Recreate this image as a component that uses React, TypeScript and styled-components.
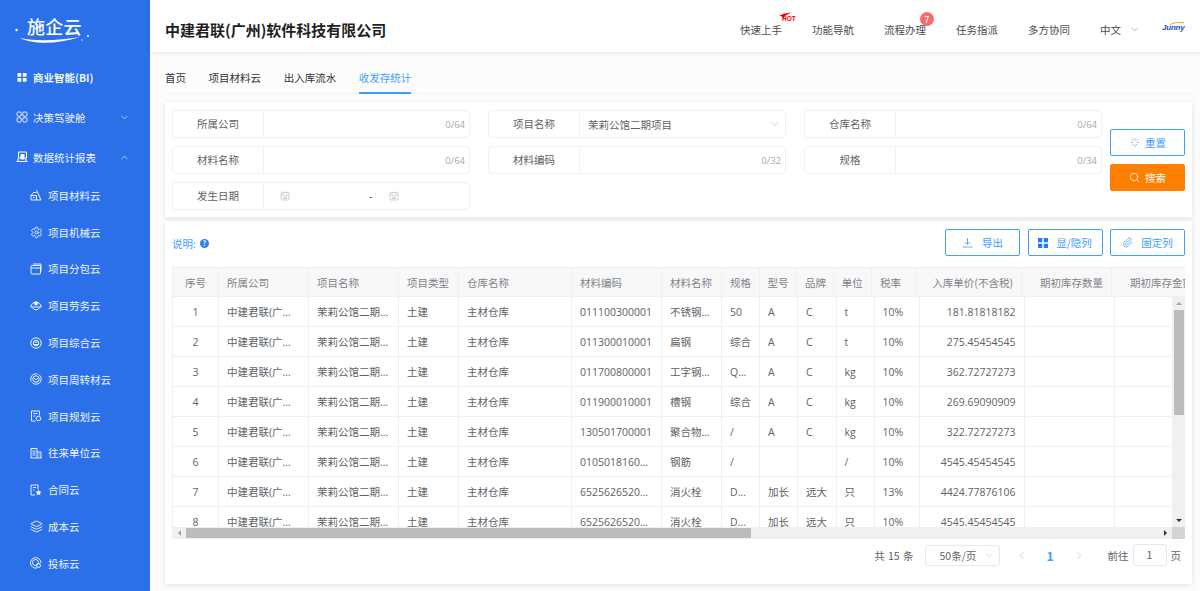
import React from "react";
import styled, { createGlobalStyle } from "styled-components";
import { ChevronDown, ChevronLeft, ChevronRight, ChevronUp, Layers, Paperclip, Search, Settings } from "lucide-react";

const GlobalStyle = createGlobalStyle`
  html, body {
    margin: 0;
    height: 100%;
    overflow: hidden;
    background: #fcfcfd;
    font-family: "Open Sans", "Noto Sans CJK SC", sans-serif;
    font-size: 10.5px;
    color: #606266;
  }
  * { box-sizing: border-box; }
`;

const Page = styled.div`
  display: flex;
  width: 1200px;
  height: 591px;
  overflow: hidden;
`;

/* sidebar */

const Sidebar = styled.aside`
  width: 150px;
  flex: none;
  background: #2b70e8;
  color: #fff;
`;

const Logo = styled.div`
  position: relative;
  height: 57px;
  padding: 14px 0 0 27px;
  font-family: "Noto Sans CJK SC", sans-serif;
  font-size: 18px;
  font-weight: 500;
  line-height: 24px;
  letter-spacing: 0.2px;
`;

const LogoSwoosh = styled.svg`
  position: absolute;
  left: 12px;
  top: 26px;
`;

const MenuItem = styled.div<{ $sub?: boolean; $strong?: boolean }>`
  display: flex;
  align-items: center;
  height: ${(p) => (p.$sub ? "36.8px" : "40px")};
  padding-left: ${(p) => (p.$sub ? "30px" : "16px")};
  gap: 6px;
  font-family: "Noto Sans CJK SC", sans-serif;
  font-weight: ${(p) => (p.$strong ? 700 : 400)};
  color: #eef4ff;
  svg { flex: none; }
`;

const MenuIconBox = styled.span<{ $sub?: boolean }>`
  display: flex;
  width: ${(p) => (p.$sub ? "12px" : "11px")};
  height: 12px;
  align-items: center;
  justify-content: center;
`;

const MenuArrow = styled.span`
  display: flex;
  margin-left: auto;
  margin-right: 20px;
`;

const menuStroke = { fill: "none", stroke: "#fff", strokeWidth: 1.8 };

const menuIcons: Record<string, React.ReactNode> = {
  bi: (
    <g fill="#fff">
      <rect x="3" y="4" width="7.5" height="7.5" rx="1" />
      <rect x="13.5" y="4" width="7.5" height="7.5" rx="1" />
      <rect x="3" y="14" width="7.5" height="7.5" rx="1" />
      <rect x="13.5" y="14" width="7.5" height="7.5" rx="1" />
    </g>
  ),
  cockpit: (
    <g {...menuStroke}>
      <rect x="2" y="2" width="8.5" height="8.5" rx="2.5" />
      <rect x="13.5" y="2" width="8.5" height="8.5" rx="2.5" />
      <rect x="2" y="13.5" width="8.5" height="8.5" rx="2.5" />
      <rect x="13.5" y="13.5" width="8.5" height="8.5" rx="2.5" />
    </g>
  ),
  report: (
    <g>
      <path d="M5 2h16v12H5z" fill="none" stroke="#fff" strokeWidth="2" />
      <path d="M1 21h22M4 15v6h16v-6" fill="none" stroke="#fff" strokeWidth="2.4" />
      <rect x="9" y="6" width="8" height="11" fill="#fff" />
    </g>
  ),
  material: (
    <g {...menuStroke}>
      <path d="M13 2l9 20H13" />
      <path d="M2 13h11v9H2zM2 13l5-6h6M6 17h3" />
    </g>
  ),
  sub: (
    <g {...menuStroke}>
      <rect x="2" y="5" width="19" height="17" rx="1.5" />
      <path d="M2 10h19M6 2h16v15" />
    </g>
  ),
  labor: (
    <g {...menuStroke}>
      <path d="M2 14a10 10 0 0 1 20 0M1 14h22M5 15a7.5 7.5 0 0 0 14 0" />
      <circle cx="12" cy="7" r="3" fill="#fff" />
    </g>
  ),
  composite: (
    <g {...menuStroke}>
      <circle cx="12" cy="12" r="10.5" />
      <circle cx="12" cy="12" r="5.5" />
      <path d="M7 15h10M9 10h6" />
    </g>
  ),
  turnover: (
    <g {...menuStroke}>
      <circle cx="12" cy="12" r="10.5" strokeDasharray="24 3" />
      <circle cx="12" cy="12" r="6.5" />
      <path d="M8 10l4 4 4-4" />
    </g>
  ),
  plan: (
    <g {...menuStroke}>
      <path d="M11 22H3V2h16v9M7 7h8M7 12h4" />
      <circle cx="17" cy="17" r="4.5" />
    </g>
  ),
  partner: (
    <g {...menuStroke}>
      <path d="M2 22V3h12v19M14 10h8v12M1 22h22M5 8h6M5 12h6M5 16h6M17 14h2M17 18h2" />
    </g>
  ),
  contract: (
    <g {...menuStroke}>
      <path d="M10 22H2V2h14v8M6 7h6M6 12h3" />
      <path d="M17 11l2 4 4 .6-3 2.8.8 4-3.8-2-3.8 2 .8-4-3-2.8 4-.6z" fill="#fff" stroke="none" />
    </g>
  ),
  bid: (
    <g {...menuStroke}>
      <path d="M14 22A10.5 10.5 0 1 1 22 12" />
      <circle cx="11" cy="11" r="6" />
      <circle cx="17" cy="17" r="4" />
    </g>
  ),
};

const MenuIcon: React.FC<{ name: string }> = ({ name }) => (
  <svg width="12" height="12" viewBox="0 0 24 24">{menuIcons[name]}</svg>
);

const subMenus = [
  ["material", "项目材料云"],
  ["gear", "项目机械云"],
  ["sub", "项目分包云"],
  ["labor", "项目劳务云"],
  ["composite", "项目综合云"],
  ["turnover", "项目周转材云"],
  ["plan", "项目规划云"],
  ["partner", "往来单位云"],
  ["contract", "合同云"],
  ["layers", "成本云"],
  ["bid", "投标云"],
];

const SideMenu = () => (
  <Sidebar>
    <Logo>
      施企云
      <LogoSwoosh width="80" height="20" viewBox="0 0 80 20">
        <circle cx="4.5" cy="4" r="1.2" fill="#fff" />
        <path d="M8 12c14 7 38 6 60-1-18 3-42 5-60 1z" fill="#fff" />
        <circle cx="76" cy="10" r="1" fill="#fff" />
        <circle cx="70" cy="14" r="0.7" fill="#fff" />
      </LogoSwoosh>
    </Logo>
    <MenuItem $strong>
      <MenuIconBox><MenuIcon name="bi" /></MenuIconBox>
      商业智能(BI)
    </MenuItem>
    <MenuItem>
      <MenuIconBox><MenuIcon name="cockpit" /></MenuIconBox>
      决策驾驶舱
      <MenuArrow><ChevronDown size={11} strokeWidth={1.5} /></MenuArrow>
    </MenuItem>
    <MenuItem>
      <MenuIconBox><MenuIcon name="report" /></MenuIconBox>
      数据统计报表
      <MenuArrow><ChevronUp size={11} strokeWidth={1.5} /></MenuArrow>
    </MenuItem>
    {subMenus.map(([icon, label]) => (
      <MenuItem $sub key={label}>
        <MenuIconBox $sub>
          {icon === "gear" && <Settings size={13} strokeWidth={1.7} />}
          {icon === "layers" && <Layers size={13} strokeWidth={1.7} />}
          {icon !== "gear" && icon !== "layers" && <MenuIcon name={icon} />}
        </MenuIconBox>
        {label}
      </MenuItem>
    ))}
  </Sidebar>
);

/* header */

const Main = styled.main`
  flex: 1;
  min-width: 0;
  display: flex;
  flex-direction: column;
`;

const Header = styled.header`
  display: flex;
  align-items: center;
  height: 52px;
  flex: none;
  padding: 6px 15px 0 15px;
  background: #fff;
  box-shadow: 0 1px 4px rgba(0, 0, 0, 0.1);
  position: relative;
`;

const CompanyName = styled.h1`
  flex: 1;
  margin: 0;
  font-family: "Noto Sans CJK SC", sans-serif;
  font-size: 15px;
  font-weight: 700;
  color: #1d1f23;
`;

const NavList = styled.nav`
  display: flex;
  align-items: center;
  gap: 30px;
  color: #4a4c50;
  font-family: "Noto Sans CJK SC", sans-serif;
`;

const NavItem = styled.span`
  position: relative;
  display: flex;
  align-items: center;
  gap: 8px;
`;

const Badge = styled.span`
  position: absolute;
  right: -8px;
  top: -10px;
  width: 14px;
  height: 14px;
  border-radius: 50%;
  background: #f56c6c;
  color: #fff;
  font-size: 9.5px;
  line-height: 14px;
  text-align: center;
`;

const HotMark = styled.span`
  position: absolute;
  left: 38px;
  top: -10px;
  width: 20px;
  height: 11px;
  color: #f00000;
  font-family: "Liberation Sans", sans-serif;
  font-size: 6.5px;
  font-weight: 700;
  line-height: 6px;
  padding: 4px 0 0 4px;
  svg { position: absolute; left: 0; top: 0; }
`;

const BrandMark = styled.span`
  position: relative;
  margin-left: 22px;
  margin-top: -4px;
  color: #1f4fc0;
  font-family: "Liberation Sans", sans-serif;
  font-size: 8px;
  font-style: italic;
  font-weight: 700;
  letter-spacing: -0.2px;
  width: 23px;
  svg { position: absolute; left: 8px; top: -1px; }
`;

const TopBar = () => (
  <Header>
    <CompanyName>中建君联(广州)软件科技有限公司</CompanyName>
    <NavList>
      <NavItem>
        快速上手
        <HotMark>
          <svg width="15" height="6" viewBox="0 0 20 8">
            <path d="M0 4c4 1 6-1 9-3-1 2 1 2 3 0 0 1 1 1 5-1-1 2-3 3-6 4l-4 4C6 6 3 5 0 4z" fill="#f00000" />
          </svg>
          HOT
        </HotMark>
      </NavItem>
      <NavItem>功能导航</NavItem>
      <NavItem>
        流程办理
        <Badge>7</Badge>
      </NavItem>
      <NavItem>任务指派</NavItem>
      <NavItem>多方协同</NavItem>
      <NavItem>
        中文
        <ChevronDown size={11} strokeWidth={1.2} color="#777" />
      </NavItem>
    </NavList>
    <BrandMark>
      Junny
      <svg width="14" height="5" viewBox="0 0 14 5">
        <path d="M0 3c4-3 9-3 14-2" fill="none" stroke="#e8a317" strokeWidth="1" />
      </svg>
    </BrandMark>
  </Header>
);

/* tabs */

const Tabs = styled.div`
  display: flex;
  gap: 22.6px;
  height: 42px;
  flex: none;
  margin: 0 8px 0 15px;
  padding-top: 10px;
  border-bottom: 1px solid #f3f4f6;
  font-family: "Noto Sans CJK SC", sans-serif;
  color: #303133;
`;

const Tab = styled.div<{ $active?: boolean }>`
  height: 32px;
  line-height: 32px;
  color: ${(p) => (p.$active ? "#409eff" : "inherit")};
  border-bottom: ${(p) => (p.$active ? "2px solid #409eff" : "none")};
`;

/* cards */

const Card = styled.section`
  margin: 0 8px 0 15px;
  background: #fff;
  box-shadow: 0 1px 5px rgba(0, 0, 0, 0.11);
`;

const FilterCard = styled(Card)`
  display: flex;
  align-items: center;
  margin-top: 8px;
  height: 115px;
  padding: 0 7px;
`;

const FilterGrid = styled.div`
  flex: 1;
  display: grid;
  grid-template-columns: repeat(3, 1fr);
  grid-auto-rows: 28px;
  gap: 8px 18px;
  align-self: flex-start;
  margin-top: 8px;
`;

const Field = styled.div`
  display: flex;
  border: 1px solid #f0f1f4;
  border-radius: 4px;
  font-family: "Open Sans", "Noto Sans CJK SC", sans-serif;
`;

const FieldLabel = styled.label`
  width: 91px;
  flex: none;
  text-align: center;
  line-height: 26px;
  border-right: 1px solid #f0f1f4;
`;

const FieldBody = styled.div`
  flex: 1;
  display: flex;
  align-items: center;
  justify-content: space-between;
  padding: 0 4px 0 8px;
`;

const Counter = styled.span`
  margin-left: auto;
  font-size: 9.5px;
  color: #a6a9ad;
`;

const DateBody = styled.div`
  flex: 1;
  display: flex;
  align-items: center;
  padding-left: 16px;
  color: #555;
`;

const DateDash = styled.span`
  margin: 0 17px 0 79px;
`;

const CalendarIcon = () => (
  <svg width="10" height="10" viewBox="0 0 20 20" fill="none" stroke="#c0c4cc" strokeWidth="1.6">
    <rect x="2" y="3" width="16" height="15" rx="2" />
    <path d="M2 8h16M6 1v4M14 1v4M6 12h8M6 15h8" />
  </svg>
);

const ButtonColumn = styled.div`
  width: 75px;
  flex: none;
  display: flex;
  flex-direction: column;
  gap: 8px;
  margin-left: 8px;
`;

const Button = styled.button<{ $primary?: boolean; $gap?: number }>`
  display: flex;
  align-items: center;
  justify-content: center;
  gap: ${(p) => p.$gap ?? 5}px;
  width: 75px;
  height: 27px;
  padding: 0;
  border: 1px solid ${(p) => (p.$primary ? "#ff8000" : "#409eff")};
  border-radius: 2px;
  background: ${(p) => (p.$primary ? "#ff8000" : "#fff")};
  color: ${(p) => (p.$primary ? "#fff" : "#409eff")};
  font-family: "Noto Sans CJK SC", sans-serif;
  font-size: 10.5px;
`;

const FilterPanel = () => (
  <FilterCard>
    <FilterGrid>
      <Field>
        <FieldLabel>所属公司</FieldLabel>
        <FieldBody><Counter>0/64</Counter></FieldBody>
      </Field>
      <Field>
        <FieldLabel>项目名称</FieldLabel>
        <FieldBody>
          茉莉公馆二期项目
          <ChevronDown size={12} strokeWidth={1} color="#a0a4ab" />
        </FieldBody>
      </Field>
      <Field>
        <FieldLabel>仓库名称</FieldLabel>
        <FieldBody><Counter>0/64</Counter></FieldBody>
      </Field>
      <Field>
        <FieldLabel>材料名称</FieldLabel>
        <FieldBody><Counter>0/64</Counter></FieldBody>
      </Field>
      <Field>
        <FieldLabel>材料编码</FieldLabel>
        <FieldBody><Counter>0/32</Counter></FieldBody>
      </Field>
      <Field>
        <FieldLabel>规格</FieldLabel>
        <FieldBody><Counter>0/34</Counter></FieldBody>
      </Field>
      <Field>
        <FieldLabel>发生日期</FieldLabel>
        <DateBody>
          <CalendarIcon />
          <DateDash>-</DateDash>
          <CalendarIcon />
        </DateBody>
      </Field>
    </FilterGrid>
    <ButtonColumn>
      <Button>
        <svg width="11" height="11" viewBox="0 0 22 22" fill="none" stroke="#7fb4f5" strokeWidth="1.6">
          <path d="M12 2v5M12 15v5M3 11h5M16 11h5M6 5l3 3M18 5l-3 3M6 17l3-3M17 17l-3-3" />
        </svg>
        重置
      </Button>
      <Button $primary>
        <Search size={11} strokeWidth={1.6} />
        搜索
      </Button>
    </ButtonColumn>
  </FilterCard>
);

/* table */

const TableCard = styled(Card)`
  margin-top: 4px;
  height: 363px;
  padding: 8px 7px 0;
`;

const Toolbar = styled.div`
  display: flex;
  align-items: center;
  gap: 7.5px;
  height: 27px;
  margin-bottom: 11px;
`;

const Explain = styled.span`
  display: flex;
  align-items: center;
  gap: 4px;
  margin-right: auto;
  margin-top: 1px;
  color: #409eff;
  font-family: "Noto Sans CJK SC", sans-serif;
`;

const HelpDot = styled.span`
  width: 9px;
  height: 9px;
  border-radius: 50%;
  background: #2f80ed;
  color: #fff;
  font-size: 7px;
  font-weight: 700;
  line-height: 9px;
  text-align: center;
`;

const TableFrame = styled.div`
  display: grid;
  grid-template-columns: 1000px 13px;
  grid-template-rows: 30px 230px 12px;
  width: 1013px;
`;

const HeadArea = styled.div`
  grid-column: 1 / 3;
  overflow: hidden;
`;

const BodyArea = styled.div`
  overflow: hidden;
`;

const Grid = styled.table<{ $width: number }>`
  table-layout: fixed;
  width: ${(p) => p.$width}px;
  border-collapse: separate;
  border-spacing: 0;
`;

const Col = styled.col<{ $width: number }>`
  width: ${(p) => p.$width}px;
`;

const HeadCell = styled.th<{ $align: string }>`
  height: 30px;
  padding: 0 8px;
  background: #f8f8f9;
  border-top: 1px solid #eff0f4;
  border-left: 1px solid #eff0f4;
  border-bottom: 1px solid #eff0f4;
  color: #808388;
  font-family: "Noto Sans CJK SC", sans-serif;
  font-weight: 400;
  text-align: ${(p) => p.$align};
  white-space: nowrap;
  overflow: hidden;
`;

const BodyCell = styled.td<{ $align: string }>`
  height: 30px;
  padding: 0 8px;
  border-left: 1px solid #eff0f4;
  border-bottom: 1px solid #eff0f4;
  color: #606266;
  text-align: ${(p) => p.$align};
  white-space: nowrap;
  overflow: hidden;
  text-overflow: ellipsis;
`;

const VBar = styled.div`
  display: flex;
  flex-direction: column;
  align-items: center;
  justify-content: space-between;
  background: #f0f0f0;
`;

const VThumb = styled.div`
  width: 10px;
  height: 105px;
  margin-bottom: auto;
  background: #bcbcbc;
`;

const HBar = styled.div`
  display: flex;
  align-items: center;
  background: #f0f0f0;
`;

const HThumb = styled.div`
  width: 565px;
  height: 10px;
  margin-right: auto;
  background: #bcbcbc;
`;

const Corner = styled.div`
  background: #d4d4d4;
`;

const Arrow = styled.span<{ $dir: "up" | "down" | "left" | "right"; $dark?: boolean }>`
  flex: none;
  width: ${(p) => (p.$dir === "up" || p.$dir === "down" ? "13px" : "14px")};
  height: ${(p) => (p.$dir === "up" || p.$dir === "down" ? "13px" : "12px")};
  display: flex;
  align-items: center;
  justify-content: center;
  &::before {
    content: "";
    border: 3px solid transparent;
    ${(p) => `border-${{ up: "bottom", down: "top", left: "right", right: "left" }[p.$dir]}-color: ${p.$dark ? "#333" : "#a3a3a3"};`}
    margin: ${(p) => ({ up: "0 0 3px", down: "3px 0 0", left: "0 3px 0 0", right: "0 0 0 3px" }[p.$dir])};
  }
`;

type Column = { title: string; head: number; body: number; align?: string; headAlign?: string };

const columns: Column[] = [
  { title: "序号", head: 46, body: 46, align: "center", headAlign: "center" },
  { title: "所属公司", head: 90, body: 90 },
  { title: "项目名称", head: 90, body: 90 },
  { title: "项目类型", head: 60, body: 60 },
  { title: "仓库名称", head: 113, body: 113 },
  { title: "材料编码", head: 90, body: 90 },
  { title: "材料名称", head: 60, body: 60 },
  { title: "规格", head: 37.5, body: 38 },
  { title: "型号", head: 37.5, body: 38 },
  { title: "品牌", head: 36.8, body: 38.5 },
  { title: "单位", head: 38.2, body: 38 },
  { title: "税率", head: 45, body: 45 },
  { title: "入库单价(不含税)", head: 105, body: 105, align: "right", headAlign: "right" },
  { title: "期初库存数量", head: 90, body: 90, align: "right", headAlign: "right" },
  { title: "期初库存金额", head: 90, body: 90, align: "right", headAlign: "right" },
];

const company = "中建君联(广州)软件科技有限公司";
const project = "茉莉公馆二期项目";

const rows = [
  ["011100300001", "不锈钢管材", "50", "A", "C", "t", "10%", "181.81818182"],
  ["011300010001", "扁钢", "综合", "A", "C", "t", "10%", "275.45454545"],
  ["011700800001", "工字钢材料", "Q235", "A", "C", "kg", "10%", "362.72727273"],
  ["011900010001", "槽钢", "综合", "A", "C", "kg", "10%", "269.69090909"],
  ["130501700001", "聚合物水泥", "/", "A", "C", "kg", "10%", "322.72727273"],
  ["01050181600001", "钢筋", "/", "", "", "/", "10%", "4545.45454545"],
  ["65256265200001", "消火栓", "DN65", "加长", "远大", "只", "13%", "4424.77876106"],
  ["65256265200002", "消火栓", "DN65", "加长", "远大", "只", "10%", "4545.45454545"],
];

const headWidth = columns.reduce((sum, c) => sum + c.head, 0);
const bodyWidth = columns.reduce((sum, c) => sum + c.body, 0);

const DataTable = () => (
  <TableFrame>
    <HeadArea>
      <Grid $width={headWidth}>
        <colgroup>
          {columns.map((c) => <Col key={c.title} $width={c.head} />)}
        </colgroup>
        <thead>
          <tr>
            {columns.map((c) => (
              <HeadCell key={c.title} $align={c.headAlign ?? "left"}>{c.title}</HeadCell>
            ))}
          </tr>
        </thead>
      </Grid>
    </HeadArea>
    <BodyArea>
      <Grid $width={bodyWidth}>
        <colgroup>
          {columns.map((c) => <Col key={c.title} $width={c.body} />)}
        </colgroup>
        <tbody>
          {rows.map((row, i) => {
            const cells = [String(i + 1), company, project, "土建", "主材仓库", ...row, "", ""];
            return (
              <tr key={i}>
                {cells.map((text, j) => (
                  <BodyCell key={j} $align={columns[j].align ?? "left"}>{text}</BodyCell>
                ))}
              </tr>
            );
          })}
        </tbody>
      </Grid>
    </BodyArea>
    <VBar>
      <Arrow $dir="up" />
      <VThumb />
      <Arrow $dir="down" $dark />
    </VBar>
    <HBar>
      <Arrow $dir="left" />
      <HThumb />
      <Arrow $dir="right" $dark />
    </HBar>
    <Corner />
  </TableFrame>
);

/* pagination */

const Pager = styled.div`
  display: flex;
  align-items: center;
  justify-content: flex-end;
  height: 22px;
  margin-top: 5px;
  padding-right: 4px;
  color: #606266;
  font-family: "Noto Sans CJK SC", sans-serif;
`;

const PageTotal = styled.span`
  word-spacing: 1px;
`;

const PageSize = styled.div`
  display: flex;
  align-items: center;
  justify-content: space-between;
  width: 75px;
  height: 21px;
  margin: 0 16px 0 11px;
  padding: 0 4px 0 14px;
  border: 1px solid #e6e8ec;
  border-radius: 3px;
`;

const PageNumber = styled.span`
  width: 22px;
  margin: 0 12.5px;
  color: #409eff;
  font-size: 12px;
  font-weight: 700;
  text-align: center;
`;

const JumpLabel = styled.span`
  margin-left: 23px;
`;

const JumpInput = styled.div`
  width: 34px;
  height: 22px;
  margin: 0 4px;
  border: 1px solid #e6e8ec;
  border-radius: 3px;
  line-height: 20px;
  text-align: center;
`;

export default function App() {
  return (
    <Page>
      <GlobalStyle />
      <SideMenu />
      <Main>
        <TopBar />
        <Tabs>
          <Tab>首页</Tab>
          <Tab>项目材料云</Tab>
          <Tab>出入库流水</Tab>
          <Tab $active>收发存统计</Tab>
        </Tabs>
        <FilterPanel />
        <TableCard>
          <Toolbar>
            <Explain>
              说明:
              <HelpDot>?</HelpDot>
            </Explain>
            <Button $gap={9}>
              <svg width="11" height="11" viewBox="0 0 22 22" fill="none" stroke="#409eff" strokeWidth="1.7">
                <path d="M11 2v12M6 10l5 5 5-5M1 20h20" />
              </svg>
              导出
            </Button>
            <Button $gap={8}>
              <svg width="10" height="10" viewBox="0 0 20 20" fill="#1f7ff0">
                <rect x="0" y="0" width="8.5" height="8.5" />
                <rect x="11.5" y="0" width="8.5" height="8.5" />
                <rect x="0" y="11.5" width="8.5" height="8.5" />
                <rect x="11.5" y="11.5" width="8.5" height="8.5" />
              </svg>
              显/隐列
            </Button>
            <Button $gap={8}>
              <Paperclip size={11} strokeWidth={1.6} />
              固定列
            </Button>
          </Toolbar>
          <DataTable />
          <Pager>
            <PageTotal>共 15 条</PageTotal>
            <PageSize>
              50条/页
              <ChevronDown size={11} strokeWidth={1} color="#b0b3b9" />
            </PageSize>
            <ChevronLeft size={11} strokeWidth={1.5} color="#b4b7bd" />
            <PageNumber>1</PageNumber>
            <ChevronRight size={11} strokeWidth={1.5} color="#b4b7bd" />
            <JumpLabel>前往</JumpLabel>
            <JumpInput>1</JumpInput>
            页
          </Pager>
        </TableCard>
      </Main>
    </Page>
  );
}
